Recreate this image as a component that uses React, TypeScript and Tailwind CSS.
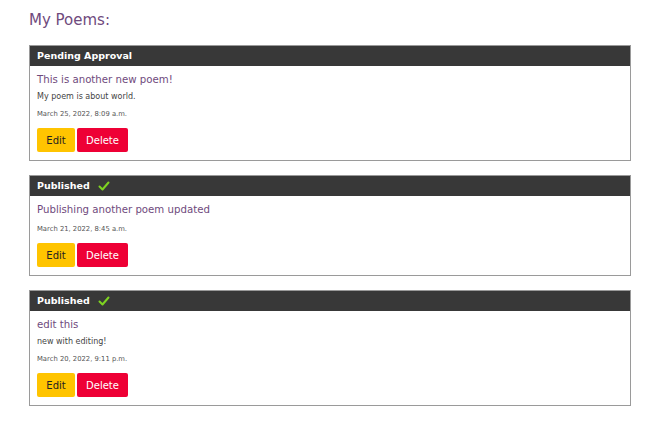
const poems = [
  {
    status: 'Pending Approval',
    published: false,
    title: 'This is another new poem!',
    body: 'My poem is about world.',
    date: 'March 25, 2022, 8:09 a.m.',
  },
  {
    status: 'Published',
    published: true,
    title: 'Publishing another poem updated',
    body: '',
    date: 'March 21, 2022, 8:45 a.m.',
  },
  {
    status: 'Published',
    published: true,
    title: 'edit this',
    body: 'new with editing!',
    date: 'March 20, 2022, 9:11 p.m.',
  },
]

function CheckIcon() {
  return (
    <svg width="12" height="10" viewBox="0 0 12 10" fill="none" xmlns="http://www.w3.org/2000/svg">
      <path d="M1.5 5.5l3 3 6-7" stroke="#7ed321" strokeWidth="2" strokeLinecap="round" strokeLinejoin="round" />
    </svg>
  )
}

export default function App() {
  return (
    <div className="min-h-[430px] bg-white px-[29px] pt-[11px] font-['DejaVu_Sans',sans-serif]">
      <h1 className="text-[15px] leading-[18px] text-[#6f4a7d]">My Poems:</h1>
      <div className="mt-[16px] flex w-[602px] flex-col gap-[14px]">
        {poems.map((poem) => (
          <div key={poem.date} className="border border-[#9a9a9a] bg-white">
            <div className="flex h-[20px] items-center gap-[8px] bg-[#383838] px-[7px] text-[9.5px] font-bold text-white">
              <span>{poem.status}</span>
              {poem.published && <CheckIcon />}
            </div>
            <div className="px-[7px] pb-[8px] pt-[6px]">
              <div className="text-[10.2px] leading-[16px] text-[#6f4a7d]">{poem.title}</div>
              {poem.body && (
                <p className="mt-[2px] text-[8px] leading-[13px] text-[#444]">{poem.body}</p>
              )}
              <p className="mt-[6px] text-[6.8px] leading-[10px] text-[#555]">{poem.date}</p>
              <div className="mt-[9px] flex gap-[2px]">
                <button className="h-[24px] w-[38px] rounded-[2px] bg-[#ffc400] text-[10px] text-[#222]">
                  Edit
                </button>
                <button className="h-[24px] w-[51px] rounded-[2px] bg-[#ee0035] text-[10px] text-white">
                  Delete
                </button>
              </div>
            </div>
          </div>
        ))}
      </div>
    </div>
  )
}
